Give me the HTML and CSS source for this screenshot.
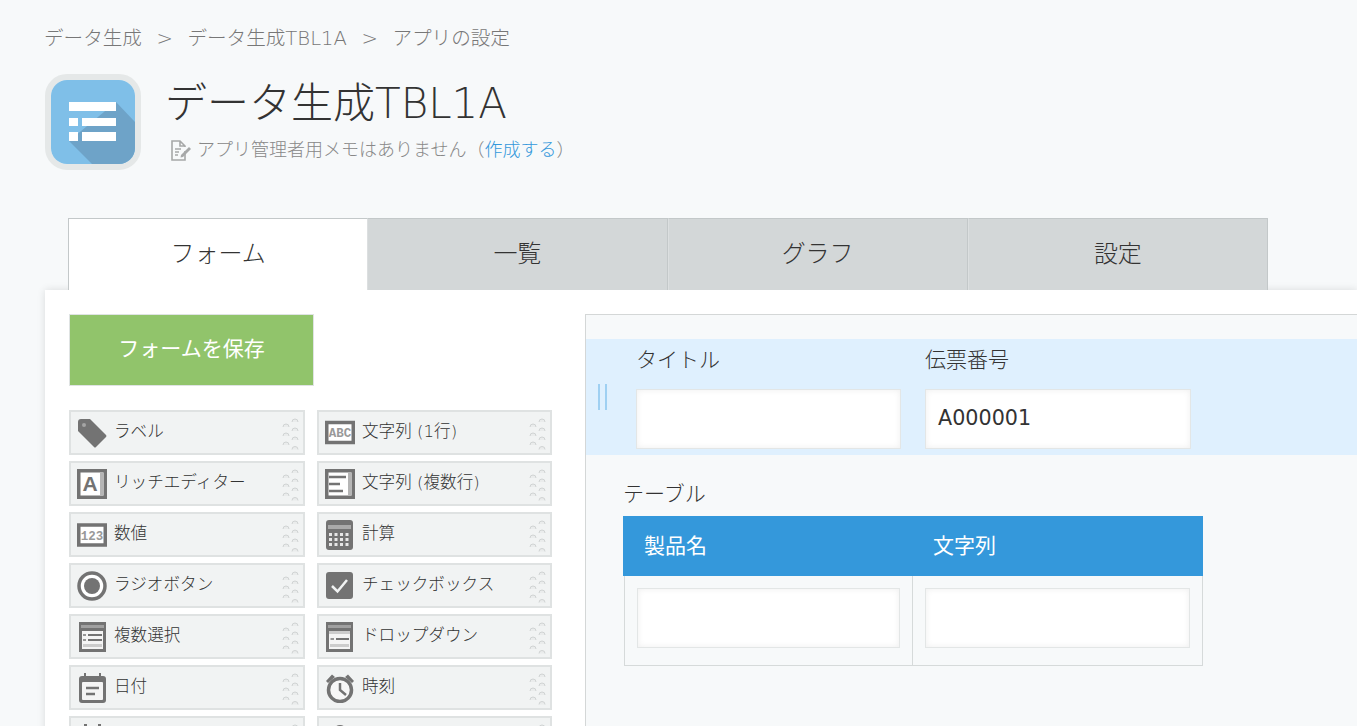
FILE: index.html
```html
<!DOCTYPE html>
<html lang="ja">
<head>
    <meta charset="UTF-8">
    <title>データ生成TBL1A - アプリの設定</title>
    <link rel="stylesheet" href="styles.css">
</head>
<body>
    <svg class="defs" width="0" height="0">
        <symbol id="grip" viewBox="0 0 18 34">
            <g fill="#eaecec" stroke="#d0d3d3" stroke-width="1">
                <path d="M1 11a3 3 0 0 1 6 0"/><path d="M1 20a3 3 0 0 1 6 0"/><path d="M1 29a3 3 0 0 1 6 0"/>
                <path d="M10 6a3 3 0 0 1 6 0"/><path d="M10 15a3 3 0 0 1 6 0"/><path d="M10 24a3 3 0 0 1 6 0"/><path d="M10 33.500a3 3 0 0 1 6 0"/>
            </g>
        </symbol>
    </svg>

    <nav class="breadcrumb">
        <span>データ生成</span><span class="sep">&gt;</span><span>データ生成TBL1A</span><span class="sep">&gt;</span><span>アプリの設定</span>
    </nav>

    <header class="app-header">
        <div class="app-icon">
            <svg viewBox="0 0 84 84" width="84" height="84">
                <rect width="84" height="84" fill="#7fbfe8"/>
                <path d="M65 22L84 42V84H41L18 61Z" fill="#6ea3c8"/>
                <path d="M18 22H65V31H18ZM18 38H27V46H18ZM31 38H65V46H31ZM18 52H27V61H18ZM31 52H65V61H31Z" fill="#fff"/>
            </svg>
        </div>
        <div class="app-title">
            <h1>データ生成TBL1A</h1>
            <p class="memo">
                <svg viewBox="0 0 22 22" width="22" height="22" fill="none" stroke="#a6a8a8" stroke-width="1.6">
                    <path d="M15 12V21H2V2H10L15 7V8M10 2V7H15"/>
                    <path d="M5 10H11M5 13H9M5 16H8"/>
                    <path d="M11 16L19 8L21 10L13 18L10.5 18.5Z" fill="#a6a8a8" stroke="none"/>
                </svg>
                <span>アプリ管理者用メモはありません（<a class="link">作成する</a>）</span>
            </p>
        </div>
    </header>

    <div class="tabs">
        <div class="tab active">フォーム</div>
        <div class="tab">一覧</div>
        <div class="tab">グラフ</div>
        <div class="tab">設定</div>
    </div>

    <main class="panel">
        <aside class="sidebar">
            <button class="save-btn">フォームを保存</button>
            <div class="palette">
                <div class="item">
                    <svg class="ico" viewBox="0 0 30 30"><path d="M1 4Q1 1 4 1H13L29 17Q30 18 29 19L19 29Q18 30 17 29L1 13Z" fill="#737373"/><circle cx="7" cy="7" r="2" fill="#a5a5a5"/></svg>
                    <span>ラベル</span><svg class="grip"><use href="#grip"/></svg>
                </div>
                <div class="item">
                    <svg class="ico" viewBox="0 0 30 30"><rect x="1.750" y="4.500" width="26.500" height="20" fill="#fff" stroke="#737373" stroke-width="3.500"/><text x="15" y="19" class="ico-text">ABC</text></svg>
                    <span>文字列 (1行)</span><svg class="grip"><use href="#grip"/></svg>
                </div>
                <div class="item">
                    <svg class="ico" viewBox="0 0 30 30"><rect x="1.750" y="1.750" width="26.500" height="26.500" fill="#fff" stroke="#737373" stroke-width="3.500"/><rect x="23" y="3.500" width="3.500" height="23" fill="#b5b5b5"/><text x="13" y="22" class="ico-letter">A</text></svg>
                    <span>リッチエディター</span><svg class="grip"><use href="#grip"/></svg>
                </div>
                <div class="item">
                    <svg class="ico" viewBox="0 0 30 30"><rect x="1.750" y="1.750" width="26.500" height="26.500" fill="#fff" stroke="#737373" stroke-width="3.500"/><rect x="23" y="3.500" width="3.500" height="23" fill="#b5b5b5"/><path d="M4 8H21M4 15H15M4 22H18" stroke="#737373" stroke-width="2.400"/></svg>
                    <span>文字列 (複数行)</span><svg class="grip"><use href="#grip"/></svg>
                </div>
                <div class="item">
                    <svg class="ico" viewBox="0 0 30 30"><rect x="1.750" y="5" width="26.500" height="20" fill="#fff" stroke="#737373" stroke-width="3.500"/><text x="15" y="19.500" class="ico-text">123</text></svg>
                    <span>数値</span><svg class="grip"><use href="#grip"/></svg>
                </div>
                <div class="item">
                    <svg class="ico" viewBox="0 0 30 30"><rect x="1" y="0" width="27" height="30" rx="3" fill="#737373"/><rect x="3" y="5" width="23" height="4" fill="#aaa"/><path d="M4 13h3v3H4zM9.500 13h3v3h-3zM15 13h3v3h-3zM20.500 13h3v3h-3zM4 18h3v3H4zM9.500 18h3v3h-3zM15 18h3v3h-3zM20.500 18h3v3h-3zM4 23h3v3H4zM9.500 23h3v3h-3zM15 23h3v3h-3zM20.500 23h3v3h-3z" fill="#e6e6e6"/></svg>
                    <span>計算</span><svg class="grip"><use href="#grip"/></svg>
                </div>
                <div class="item">
                    <svg class="ico" viewBox="0 0 30 30"><circle cx="15" cy="15" r="13" fill="#fff" stroke="#737373" stroke-width="3.500"/><circle cx="15" cy="15" r="8" fill="#737373"/></svg>
                    <span>ラジオボタン</span><svg class="grip"><use href="#grip"/></svg>
                </div>
                <div class="item">
                    <svg class="ico" viewBox="0 0 30 30"><rect x="1" y="1" width="27" height="27" rx="3" fill="#737373"/><path d="M7 15L12.500 20.500L22 9" fill="none" stroke="#f1f3f3" stroke-width="2.500"/></svg>
                    <span>チェックボックス</span><svg class="grip"><use href="#grip"/></svg>
                </div>
                <div class="item">
                    <svg class="ico" viewBox="0 0 30 30"><rect x="2" y="0" width="27" height="30" fill="#737373"/><rect x="4" y="3" width="23" height="3" fill="#a0a0a0"/><rect x="5" y="9" width="21" height="18" fill="#f4f4f4"/><path d="M11 13H25M11 18H25" stroke="#737373" stroke-width="2"/><path d="M6 13H9M6 18H9" stroke="#777" stroke-width="1.500"/><rect x="6" y="22" width="19" height="3" fill="#ccc"/></svg>
                    <span>複数選択</span><svg class="grip"><use href="#grip"/></svg>
                </div>
                <div class="item">
                    <svg class="ico" viewBox="0 0 30 30"><rect x="1" y="0" width="27" height="30" fill="#737373"/><rect x="3" y="3" width="23" height="3" fill="#a0a0a0"/><rect x="4" y="9" width="21" height="18" fill="#f4f4f4"/><rect x="4" y="9" width="21" height="3" fill="#ccc"/><path d="M11 17H24" stroke="#737373" stroke-width="2"/><path d="M5.500 17H9" stroke="#777" stroke-width="1.500"/><rect x="5" y="22" width="19" height="3" fill="#ccc"/></svg>
                    <span>ドロップダウン</span><svg class="grip"><use href="#grip"/></svg>
                </div>
                <div class="item">
                    <svg class="ico" viewBox="0 0 30 30"><path d="M7 0h2v4H7zM22 0h2v4h-2z" fill="#737373"/><rect x="2" y="3" width="27" height="27" rx="3" fill="#737373"/><rect x="5" y="9" width="21" height="18" rx="1" fill="#f4f4f4"/><path d="M9 15H22M9 21H18" stroke="#737373" stroke-width="2.400"/></svg>
                    <span>日付</span><svg class="grip"><use href="#grip"/></svg>
                </div>
                <div class="item">
                    <svg class="ico" viewBox="0 0 30 30"><circle cx="15" cy="17" r="11.500" fill="#f7f7f7" stroke="#737373" stroke-width="3.500"/><path d="M15 10V17L21 22" fill="none" stroke="#737373" stroke-width="2.500"/><path d="M1 8L7 1.500L10 4L3 10ZM29 8L23 1.500L20 4L27 10Z" fill="#737373"/></svg>
                    <span>時刻</span><svg class="grip"><use href="#grip"/></svg>
                </div>
                <div class="item">
                    <svg class="ico" viewBox="0 0 30 30"><path d="M7 0h3v4H7zM21 0h3v4h-3z" fill="#737373"/><rect x="2" y="3" width="27" height="27" rx="3" fill="#737373"/></svg>
                    <svg class="grip"><use href="#grip"/></svg>
                </div>
                <div class="item">
                    <svg class="ico" viewBox="0 0 30 30"><circle cx="15" cy="8" r="7" fill="#737373"/><path d="M3 30Q3 17 15 17T27 30Z" fill="#737373"/></svg>
                    <svg class="grip"><use href="#grip"/></svg>
                </div>
            </div>
        </aside>

        <section class="canvas">
            <div class="form-row">
                <div class="handle"></div>
                <div class="field">
                    <label>タイトル</label>
                    <div class="input"></div>
                </div>
                <div class="field field-wide">
                    <label>伝票番号</label>
                    <div class="input">A000001</div>
                </div>
            </div>

            <div class="subtable">
                <label>テーブル</label>
                <div class="subtable-head">
                    <div>製品名</div>
                    <div>文字列</div>
                </div>
                <div class="subtable-body">
                    <div class="cell"><div class="input"></div></div>
                    <div class="cell"><div class="input"></div></div>
                </div>
            </div>
        </section>
    </main>
</body>
</html>
```

FILE: styles.css
```css
* {
    box-sizing: border-box;
}

html, body {
    height: 726px;
    overflow: hidden;
}

body {
    margin: 0;
    background: #f7f9fa;
    color: #333;
    font-family: "DejaVu Sans", "Noto Sans CJK JP", sans-serif;
    font-weight: 300;
}

.defs {
    display: block;
    height: 0;
}

.breadcrumb {
    display: flex;
    gap: 14.5px;
    padding: 25px 0 0 44px;
    height: 74px;
    font-size: 19.6px;
    line-height: 28px;
    color: #777;
}

.app-header {
    display: flex;
    gap: 24px;
    margin-left: 45px;
    height: 144px;
}

.app-icon {
    width: 96px;
    height: 96px;
    border: 6px solid #e5e8e8;
    border-radius: 22px;
    overflow: hidden;
}

.app-icon svg {
    display: block;
}

.app-title {
    padding-top: 2px;
}

h1 {
    margin: 0;
    font-size: 42px;
    font-weight: 300;
    line-height: 56px;
    color: #333;
}

.memo {
    display: flex;
    align-items: center;
    gap: 5px;
    margin: 4px 0 0 5px;
    font-size: 18px;
    line-height: 28px;
    color: #888;
}

.link {
    color: #3498db;
}

.tabs {
    display: flex;
    margin-left: 68px;
    width: 1200px;
    height: 72px;
}

.tab {
    flex: 1;
    display: flex;
    align-items: center;
    justify-content: center;
    padding-bottom: 7px;
    background: #d3d7d8;
    border: 1px solid #c3c8c9;
    border-left-color: #dcdfe0;
    border-bottom: 0;
    font-size: 24px;
}

.tab.active {
    background: #fff;
    border-left-color: #c3c8c9;
    border-right: 0;
}

.panel {
    display: flex;
    gap: 33px;
    margin-left: 45px;
    padding: 24px 0 0 24px;
    height: 500px;
    background: #fff;
    box-shadow: 0 0 8px rgba(0, 0, 0, 0.12);
}

.sidebar {
    width: 483px;
    flex: none;
}

.save-btn {
    display: block;
    width: 245px;
    height: 72px;
    padding: 0 0 6px;
    background: #91c46b;
    border: 1px solid #dfe3e3;
    color: #fff;
    font-family: inherit;
    font-size: 21px;
    font-weight: 400;
}

.palette {
    display: grid;
    grid-template-columns: 236px 235px;
    grid-auto-rows: 45px;
    gap: 6px 12px;
    margin-top: 24px;
}

.item {
    display: flex;
    align-items: center;
    padding: 0 3px 0 6px;
    background: #f1f3f3;
    border: 2px solid #dfe2e2;
    font-size: 16.6px;
    color: #333;
}

.item span {
    padding-bottom: 6px;
}

.ico {
    width: 30px;
    height: 30px;
    flex: none;
    margin-right: 7px;
}

.ico-text {
    font-family: "Liberation Mono", monospace;
    font-size: 12.5px;
    font-weight: 700;
    text-anchor: middle;
    fill: #999;
}

.ico-letter {
    font-family: "Liberation Sans", sans-serif;
    font-size: 21px;
    font-weight: 700;
    text-anchor: middle;
    fill: #737373;
}

.grip {
    width: 18px;
    height: 34px;
    margin-left: auto;
    flex: none;
}

.canvas {
    width: 900px;
    flex: none;
    padding-top: 24px;
    background: #f7f9fa;
    border: 1px solid #d4d7d7;
}

.form-row {
    display: flex;
    height: 116px;
    padding: 8px 0 6px 12px;
    background: #dff0fe;
}

.handle {
    width: 9px;
    height: 26px;
    margin: 37px 29px 0 0;
    border-left: 2px solid #9fd0f2;
    border-right: 2px solid #9fd0f2;
}

.field {
    width: 265px;
    margin-right: 24px;
}

.field-wide {
    width: 266px;
}

label {
    display: block;
    font-size: 21px;
    line-height: 26px;
    color: #333;
}

.field label {
    margin-bottom: 16px;
}

.input {
    height: 60px;
    padding-left: 12px;
    background: #fff;
    border: 1px solid #e3e6e6;
    box-shadow: inset 0 0 6px rgba(0, 0, 0, 0.07);
    font-size: 20.7px;
    font-weight: 400;
    line-height: 56px;
    color: #333;
}

.subtable {
    margin: 26px 0 0 37px;
    width: 580px;
}

.subtable label {
    margin-bottom: 9px;
}

.subtable-head {
    display: grid;
    grid-template-columns: 289px 1fr;
    height: 60px;
    background: #3498db;
    color: #fff;
    font-size: 21px;
    font-weight: 400;
    line-height: 61px;
}

.subtable-head div {
    padding-left: 21px;
}

.subtable-body {
    display: grid;
    grid-template-columns: 288px 1fr;
    margin-left: 1px;
    height: 90px;
    border: 1px solid #d6dada;
    border-top: 0;
}

.cell {
    padding: 12px;
}

.cell:first-child {
    border-right: 1px solid #d6dada;
}
```
